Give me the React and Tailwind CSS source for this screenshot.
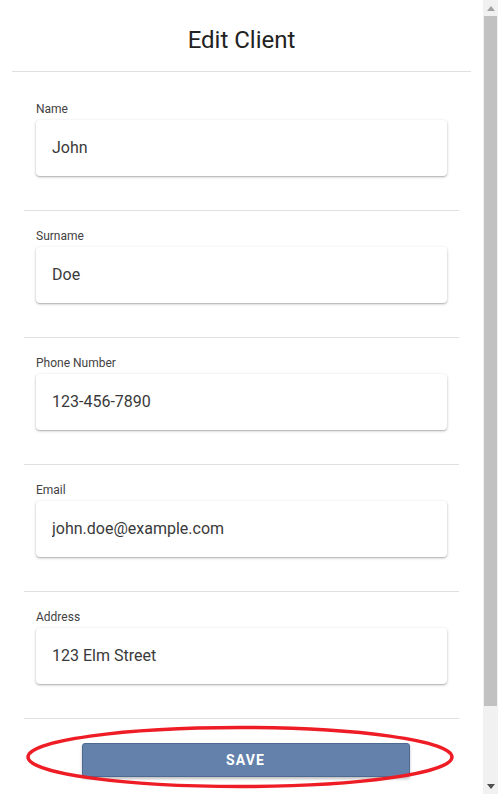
import React, { useState } from "react";

const fields = [
  { key: "name", label: "Name", value: "John" },
  { key: "surname", label: "Surname", value: "Doe" },
  { key: "phone", label: "Phone Number", value: "123-456-7890" },
  { key: "email", label: "Email", value: "john.doe@example.com" },
  { key: "address", label: "Address", value: "123 Elm Street" },
];

const App = () => {
  const [client, setClient] = useState(
    Object.fromEntries(fields.map((f) => [f.key, f.value]))
  );

  return (
    <div className="flex h-[794px] w-[498px] overflow-hidden bg-white font-['Roboto',sans-serif]">
      <div className="relative w-[483px] shrink-0">
        <div className="mx-[12px] flex h-[72px] justify-center border-b border-[#e0e0e0] pt-[26px]">
          <h1 className="text-[24px] leading-[28px] font-normal text-[#222]">Edit Client</h1>
        </div>

        {fields.map((f, i) => (
          <div
            key={f.key}
            className={`mx-[24px] border-b border-[#e0e0e0] px-[12px] pb-[34px] ${
              i === 0 ? "pt-[30px]" : "pt-[18px]"
            }`}
          >
            <label className="block text-[12px] leading-[14px] text-[#424242]">
              {f.label}
            </label>
            <input
              type="text"
              value={client[f.key]}
              onChange={(e) => setClient({ ...client, [f.key]: e.target.value })}
              className="mt-[4px] block h-[56px] w-full rounded-[4px] bg-white px-[16px] pb-[2px] text-[16px] text-[#3a3a3a] shadow-[0_1px_3px_rgba(0,0,0,0.25),0_1px_1px_rgba(0,0,0,0.12)] outline-none"
            />
          </div>
        ))}

        <div className="flex justify-center pt-[24px] pl-[8px]">
          <button className="h-[34px] w-[328px] rounded-[3px] border border-[#4f6a92] bg-[#6381ab] text-[14px] font-bold tracking-[0.08em] text-white shadow-[0_2px_3px_rgba(0,0,0,0.25)]">
            SAVE
          </button>
        </div>

        <svg
          className="pointer-events-none absolute left-0 top-[722px]"
          width="483"
          height="72"
          viewBox="0 0 483 72"
        >
          <ellipse
            cx="240"
            cy="35"
            rx="212"
            ry="29.5"
            fill="none"
            stroke="#ee1c25"
            strokeWidth="3.5"
          />
        </svg>
      </div>

      <div className="flex w-[15px] flex-col bg-[#f1f1f1]">
        <div className="flex h-[16px] items-center justify-center">
          <svg width="8" height="5" viewBox="0 0 8 5">
            <path d="M0 5 L4 0 L8 5 Z" fill="#a3a3a3" />
          </svg>
        </div>
        <div className="mx-[1px] h-[690px] bg-[#c1c1c1]" />
        <div className="flex-1" />
        <div className="flex h-[16px] items-center justify-center">
          <svg width="8" height="5" viewBox="0 0 8 5">
            <path d="M0 0 L8 0 L4 5 Z" fill="#505050" />
          </svg>
        </div>
      </div>
    </div>
  );
};

export default App;
